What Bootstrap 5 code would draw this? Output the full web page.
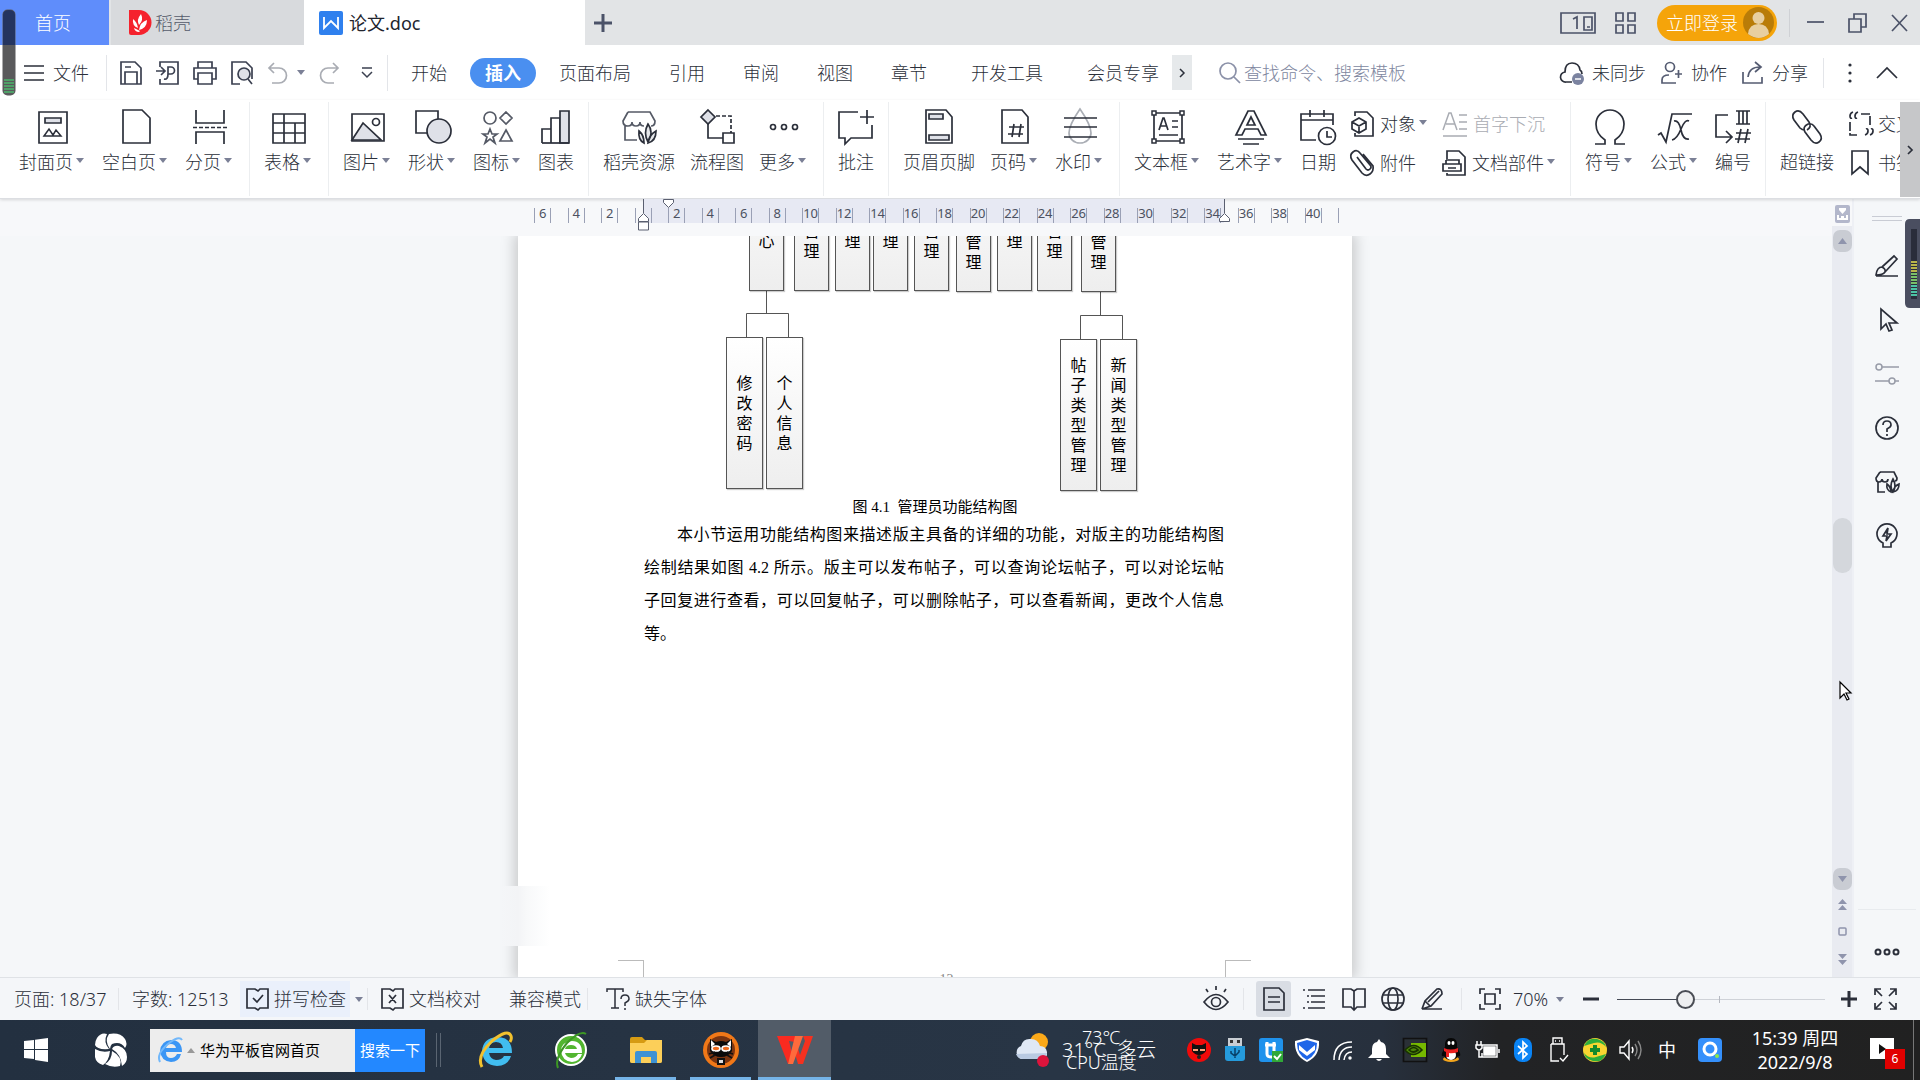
<!DOCTYPE html>
<html lang="zh-CN">
<head>
<meta charset="utf-8">
<meta name="viewport" content="width=device-width, initial-scale=1">
<title>论文.doc</title>
<link href="https://cdn.jsdelivr.net/npm/bootstrap@5.3.0/dist/css/bootstrap.min.css" rel="stylesheet">
<script src="https://cdn.jsdelivr.net/npm/bootstrap@5.3.0/dist/js/bootstrap.bundle.min.js"></script>
<style>
  :root { --ink: #2b2f3a; --soft: #7b8096; --panel: #f5f7f9; }
  body { font-family: "Noto Sans", "Noto Sans CJK SC", sans-serif; font-size: 18px; line-height: 24px; font-weight: 300; color: var(--ink); background: var(--panel); overflow: hidden; }
  button, input { font: inherit; color: inherit; }
  button { border: 0; background: none; padding: 0; white-space: nowrap; }
  svg { display: block; flex: none; overflow: visible; }
  svg:not([fill]) { fill: none; }
  svg:not([stroke]) { stroke: currentColor; }
  svg:not([stroke-width]) { stroke-width: 1.7; }
  .shade { fill: #dfe1e8; }
  svg.solid { fill: currentColor; stroke: none; }
  .caret { width: 0; height: 0; border: 4px solid transparent; border-top: 5px solid var(--soft); border-bottom: 0; flex: none; }
  .rule { width: 1px; background: #e3e5e9; flex: none; }

  /* title bar */
  .titlebar { height: 45px; background: #e2e4e6; color: #4b5268; }
  .tab-home { width: 109px; background: #5f8dfb; color: #fff; padding-right: 3px; }
  .tab-shop { width: 193px; background: #d8dadd; margin-left: 2px; padding-left: 17px; gap: 4px; color: #555a6b; }
  .tab-doc { width: 281px; background: #fff; color: #22252e; padding-left: 15px; gap: 6px; font-weight: 400; }
  .tab-new { width: 35px; }
  .login { width: 120px; height: 36px; border-radius: 18px; background: #f5a40a; color: #fff; padding: 0 3px 0 9px; margin: 0 12px 0 19px; }
  .winbtns { gap: 23px; padding: 0 11px 0 17px; }

  /* menu row */
  .menubar { height: 55px; background: #fff; }
  .filebtn { margin-left: 23px; gap: 8px; width: 83px; }
  .quick { gap: 13px; padding-left: 12px; width: 280px; color: #3b4050; }
  .menutab { height: 30px; border-radius: 15px; padding: 0 15px; margin: 0 4px; }
  .menutab.on { background: #4a8ff0; color: #fff; font-weight: 700; }
  .menutab.wide { margin-left: 10px; }
  .more { width: 20px; height: 35px; background: #e6e9eb; margin-left: -6px; }
  .find { margin-left: 27px; gap: 3px; color: #8b91a8; }
  .find input { border: 0; outline: 0; width: 200px; padding: 0; background: none; }
  .find input::placeholder { color: #8087a0; opacity: 1; }
  .share { gap: 15px; padding-right: 22px; }

  /* ribbon */
  .ribbon { height: 99px; background: #fff; border-bottom: 1px solid #dcdee2; box-shadow: 0 1px 3px #0002; position: relative; }
  .groups { gap: 14px; padding-left: 19px; min-width: 0; overflow: hidden; }
  .groups .rule { background: #eceef0; height: 94px; margin-top: 2px; }
  .group { gap: 15px; }
  .big { display: flex; flex-direction: column; align-items: center; gap: 5px; padding-top: 9px; height: 90px; flex: none; }
  .drop { display: flex; align-items: center; }
  .drop::after { content: ""; border: 4px solid transparent; border-top: 5px solid var(--soft); border-bottom: 0; margin: 0 3px 3px 3px; }
  .pairs { display: grid; grid-template-columns: auto auto; column-gap: 12px; grid-auto-rows: 39px; padding-top: 4px; margin-right: -2px; align-items: center; justify-items: start; align-content: start; }
  .pairs button { display: flex; align-items: center; gap: 6px; }
  .off { color: #a9acb3; }
  .ribbon-next { width: 20px; height: 95px; margin-top: 2px; background: #c6c7c9; }

  /* document area */
  .work { padding-left: 38px; }
  .ruler { height: 37px; background: #f7f8fa; margin-left: -38px; padding-left: 38px; }
  .ruler-in { width: 834px; position: relative; }
  .ticks { width: 805px; height: 24px; margin-left: 16px; padding-top: 9px; background: linear-gradient(90deg, #0000 109px, #e7e9f3 109px, #e7e9f3 690px, #0000 690px); color: #4c5160; font-size: 13px; line-height: 10px; }
  .ticks span { flex: 1 1 0; height: 15px; border-left: 1px solid #9aa0b5; }
  .ticks span:last-child { border-right: 1px solid #9aa0b5; }
  .ticks b { display: flex; justify-content: center; font-weight: 400; width: 50%; height: 15px; border-right: 1px solid #9aa0b5; }
  .marks { position: absolute; left: 0; top: 0; color: #5a5f70; }
  .sheet { width: 834px; background: #fff; box-shadow: 0 0 14px 3px #0003; position: relative; clip-path: inset(0 -18px); }
  .chart { height: 260px; position: relative; overflow: hidden; color: #000; }
  .node { position: absolute; width: 35px; border: 1px solid #555; background: linear-gradient(#fff, #eee); box-shadow: 1px 1px 1px #0003; display: flex; flex-direction: column; align-items: center; font-size: 16px; line-height: 20px; font-weight: 400; }
  .node span { width: 16px; word-break: break-all; }
  .upper { top: -100px; height: 155px; justify-content: flex-end; padding-bottom: 29px; }
  .upper.hi { padding-bottom: 39px; }
  .upper.lo { padding-bottom: 19px; height: 156px; }
  .leaf { width: 37px; height: 152px; justify-content: center; padding-bottom: 1px; }
  .prose { padding: 0 128px 0 126px; color: #000; font: 400 16px/33px "Liberation Serif", "Noto Sans CJK SC", serif; }
  .prose .ln { display: block; text-align: justify; text-align-last: justify; white-space: nowrap; }
  .prose .ln:first-child { padding-left: 33px; }
  .prose .ln:last-child { text-align-last: left; }
  .figcap { font: 400 15px/22px "Liberation Serif", "Noto Sans CJK SC", serif; color: #000; text-align: center; }
  .corners { position: absolute; left: 100px; right: 101px; bottom: 0; height: 17px; color: #888; overflow: hidden; font: 14px/20px "Liberation Serif", serif; }
  .corners i { width: 26px; height: 17px; border: 1px solid #bbb; border-width: 1px 1px 0 0; }
  .corners i:last-child { border-width: 1px 0 0 1px; }
  .corners span { padding: 10px 0 0 24px; }
  .haze { position: absolute; left: -18px; bottom: 31px; width: 50px; height: 60px; background: linear-gradient(90deg, #f4f6f8, #f3f4f6 36%, #f8f9fa 55%, #fff); }

  /* scrollbar and side panel */
  .scroller { width: 22px; background: #e9ebf1; border-right: 2px solid #eef0f5; color: #8f94ac; }
  .scroller .top { height: 27px; background: #f7f8fa; padding-top: 6px; }
  .knob { width: 19px; height: 22px; border-radius: 7px; background: #c9ccd3; }
  .thumb { width: 19px; height: 55px; border-radius: 9px; background: #d4d7dc; margin-top: 266px; }
  .side { width: 66px; }
  .side .grip { width: 30px; height: 5px; border: 1px solid #c9ccd4; border-width: 1px 0; margin: 17px 0 18px; }
  .side button { height: 54px; }
  .side .side-more { height: 67px; padding-top: 16px; }
  .side hr { width: 58px; margin: 0; color: #c4c7cf; }

  /* status bar */
  .status { height: 43px; background: #f4f6f9; border-top: 1px solid #dfe2e6; padding-left: 14px; }
  .status .rule { height: 22px; }
  .spell { width: 110px; height: 36px; background: #eaf0fb; gap: 5px; padding-left: 6px; margin-left: 13px; }
  .view { width: 35px; height: 36px; border-radius: 3px; }
  .view.on { background: #d9dde4; }
  .zoom { appearance: none; width: 208px; height: 20px; background: linear-gradient(#b5b8c0, #b5b8c0) 102px 50%/1px 7px no-repeat, linear-gradient(90deg, #444955 68px, #cfd2d8 68px) 0 50%/100% 1px no-repeat; }
  .zoom::-webkit-slider-thumb { appearance: none; width: 19px; height: 19px; border-radius: 50%; border: 2px solid #4a4d55; background: #eeeff1; }

  /* taskbar */
  .taskbar { height: 60px; background: linear-gradient(90deg, #233040, #283545 55%, #27303d 72%, #222325 78%, #212121); color: #fff; font-weight: 400; }
  .tasksearch { width: 275px; height: 43px; background: #ededed; color: #000; font-size: 15px; margin-left: 22px; }
  .tasksearch input { border: 0; outline: 0; background: none; flex: 1; min-width: 0; padding: 0 0 0 5px; }
  .tasksearch button { width: 70px; flex: none; background: #2388ff; color: #fff; height: 43px; }
  .grips { width: 5px; height: 34px; border: 1px solid #5a6572; border-width: 0 1px; margin: 0 24px 0 11px; }
  .app { height: 60px; width: 61px; border-bottom: 3px solid transparent; margin: 0 7px; padding-top: 3px; }
  .app.run { border-color: #75b4e8; }
  .app.now { width: 73px; margin: 0; background: #525c68; }
  .weather { width: 102px; height: 60px; position: relative; margin: 0 17px 0 12px; font-weight: 300; white-space: nowrap; }
  .weather span { position: absolute; }
  .w-a { left: 20px; top: 5px; }
  .w-b { left: 0; top: 18px; font-size: 20px; }
  .w-c { left: 4px; top: 30px; }
  .tray > span { width: 36px; display: flex; justify-content: center; }
  .clock { width: 106px; text-align: center; margin: 0 22px 0 7px; }
  .notice { width: 44px; position: relative; border-right: 1px solid #777; height: 60px; margin-right: 6px; }
  .notice span { position: absolute; left: 15px; top: 29px; width: 20px; height: 20px; background: #e10000; font-size: 12px; line-height: 20px; text-align: center; }

  /* overlays of the desktop gauge and the pointer */
  .gauge-l { position: absolute; left: 2px; top: 9px; z-index: 5; }
  .gauge-r { position: absolute; right: 0; top: 219px; z-index: 5; }
  .pointer { position: absolute; left: 1839px; top: 681px; z-index: 6; }
</style>
</head>
<body class="vh-100 d-flex flex-column position-relative">

<header class="titlebar d-flex align-items-stretch">
  <a href="#" class="tab-home d-flex align-items-center justify-content-center text-decoration-none">首页</a>
  <a href="#" class="tab-shop d-flex align-items-center text-decoration-none">
    <svg width="23" height="25" viewBox="0 0 23 25" stroke="none"><path d="M1 0h10a12 12 0 0 1 0 25H3a2 2 0 0 1-2-2z" fill="#f5222d"/><g fill="#fff"><path d="M13 4q3 6-2 11q-3-5 2-11z"/><path d="M5 9q4 3 5 9q-6-2-5-9z"/><path d="M19 10q0 8-8 10q1-8 8-10z"/><path d="M6 18l6 3-1 1q-4 0-5-4z"/></g></svg>稻壳</a>
  <a href="#" class="tab-doc d-flex align-items-center text-decoration-none">
    <svg width="24" height="24" viewBox="0 0 24 24" stroke="none"><rect width="24" height="24" rx="2" fill="#2f80ee"/><path d="M5 6v11l7-7 7 7V6" stroke="#fff" stroke-width="1.800"/></svg>论文.doc</a>
  <button class="tab-new d-flex align-items-center justify-content-center" aria-label="新建"><svg width="18" height="18" viewBox="0 0 18 18" stroke-width="3"><path d="M9 0v18M0 9h18"/></svg></button>
  <div class="ms-auto d-flex align-items-center">
    <svg width="36" height="22" viewBox="0 0 36 22"><path d="M1 1h34v20H1zM24 5h8v13h-8zM27 15h3M13 7l4-2v12"/></svg>
    <svg class="ms-3" width="26" height="24" viewBox="0 0 26 24"><path d="M4 2h7v8H4zM16 2h7v8h-7zM4 14h7v8H4zM16 14h7v8h-7z"/></svg>
    <button class="login d-flex align-items-center justify-content-between">立即登录<svg width="31" height="31" viewBox="0 0 31 31" stroke="none"><circle cx="15.500" cy="15.500" r="15.500" fill="#b97c08"/><circle cx="15.500" cy="11" r="6" fill="#e8cfa0"/><path d="M5 27q1-10 10.500-10T26 27q-10 8-21 0z" fill="#e8cfa0"/></svg></button>
    <div class="rule" style="height:28px;background:#cfd1d5"></div>
    <div class="winbtns d-flex align-items-center">
      <button aria-label="最小化"><svg width="18" height="20" viewBox="0 0 18 20"><path d="M0 9h17"/></svg></button>
      <button aria-label="还原"><svg width="20" height="20" viewBox="0 0 20 20"><path d="M1 6h12v13H1zM6 6V1h12v13h-5"/></svg></button>
      <button aria-label="关闭"><svg width="18" height="20" viewBox="0 0 18 20"><path d="M1 2l15 16M16 2L1 18"/></svg></button>
    </div>
  </div>
</header>

<nav class="menubar d-flex align-items-center">
  <button class="filebtn d-flex align-items-center"><svg width="22" height="18" viewBox="0 0 22 18" stroke-width="1.500"><path d="M1 2h20M1 9h20M1 16h20"/></svg>文件</button>
  <div class="rule" style="height:36px"></div>
  <div class="quick d-flex align-items-center">
    <button aria-label="保存"><svg width="24" height="24" viewBox="0 0 24 24"><path d="M2 1h14l6 6v16H2zM6 23V11h12v12M6 6h6"/></svg></button>
    <button aria-label="输出"><svg width="24" height="24" viewBox="0 0 24 24"><path d="M4 6V1h18v22H4v-5M0 10h9M5 6l4 4-4 4M12 6h3a3 3 0 0 1 0 7h-3zM12 13q0 6-4 5"/></svg></button>
    <button aria-label="打印"><svg width="24" height="24" viewBox="0 0 24 24"><path d="M5 7V1h14v6M5 18H1V7h22v11h-4M5 12h14v11H5z"/></svg></button>
    <button aria-label="预览"><svg width="24" height="24" viewBox="0 0 24 24"><path d="M10 23H2V1h14l6 6v5"/><circle class="shade" cx="14" cy="13" r="6"/><path d="M18 18l4 5M22 12v6"/></svg></button>
    <button class="off" aria-label="撤销"><svg width="22" height="24" viewBox="0 0 22 24"><path d="M7 2L2 7l5 5M2 7h10a7 7 0 0 1 0 15H5"/></svg></button>
    <span class="caret" style="margin-left:-5px"></span>
    <button class="off" aria-label="恢复"><svg width="22" height="24" viewBox="0 0 22 24"><path d="M15 2l5 5-5 5M20 7H10a7 7 0 0 0 0 15h6"/></svg></button>
    <button class="ms-2" aria-label="自定义"><svg width="12" height="12" viewBox="0 0 12 12" stroke-width="1.500"><path d="M1 1h10M1 5l5 5 5-5"/></svg></button>
  </div>
  <div class="rule" style="height:36px;margin-right:4px"></div>
  <button class="menutab">开始</button><button class="menutab on">插入</button><button class="menutab">页面布局</button><button class="menutab">引用</button><button class="menutab">审阅</button><button class="menutab">视图</button><button class="menutab">章节</button><button class="menutab wide">开发工具</button><button class="menutab wide">会员专享</button>
  <button class="more d-flex align-items-center justify-content-center" aria-label="更多"><svg width="5" height="10" viewBox="0 0 5 10" stroke-width="1.500"><path d="M0 1l4 4-4 4"/></svg></button>
  <label class="find d-flex align-items-center"><svg width="22" height="24" viewBox="0 0 22 24"><circle cx="9" cy="10" r="8"/><path d="M15 16l6 6"/></svg><input type="text" aria-label="搜索" placeholder="查找命令、搜索模板"></label>
  <div class="share d-flex align-items-center ms-auto">
    <button class="d-flex align-items-center gap-2"><svg width="24" height="24" viewBox="0 0 24 24"><path d="M12 21H6A5 5 0 0 1 5 11Q5 2 12 2t8 7q2 1 2 4"/><circle cx="18" cy="18" r="6" fill="#7b83a0" stroke="none"/><path d="M15 18h6" stroke="#fff" stroke-width="1.500"/></svg>未同步</button>
    <button class="d-flex align-items-center gap-2"><svg width="22" height="24" viewBox="0 0 22 24" stroke="#555c72"><circle cx="9" cy="6" r="4.500"/><path d="M15 22H1v-3q0-5 7-5M14 13h7M17.500 9v8"/></svg>协作</button>
    <button class="d-flex align-items-center gap-2"><svg width="22" height="24" viewBox="0 0 22 24" stroke="#555c72"><path d="M1 11v11h19v-6M6 16q1-10 12-10M13 1l6 5-6 5"/></svg>分享</button>
    <div class="rule" style="height:30px"></div>
    <button aria-label="菜单"><svg class="solid" width="22" height="20" viewBox="0 0 22 20"><circle cx="11" cy="2" r="1.600"/><circle cx="11" cy="10" r="1.600"/><circle cx="11" cy="18" r="1.600"/></svg></button>
    <button aria-label="折叠功能区"><svg width="22" height="14" viewBox="0 0 22 14"><path d="M1 12L11 2l10 10"/></svg></button>
  </div>
</nav>

<section class="ribbon d-flex justify-content-between">
  <div class="groups d-flex flex-fill">
    <div class="group d-flex">
      <button class="big"><svg width="36" height="36" viewBox="0 0 36 36"><path d="M4 3h28v31H4z"/><path class="shade" d="M10 9h16v5H10z"/><path d="M9 27l5-7 4 6 3-5 5 6z" stroke-width="1.500"/></svg><span class="drop">封面页</span></button>
      <button class="big"><svg width="36" height="36" viewBox="0 0 36 36"><path d="M5 1h19l8 8v25H5z"/></svg><span class="drop">空白页</span></button>
      <button class="big"><svg width="36" height="36" viewBox="0 0 36 36"><path d="M4 1v13h28V1M4 35V23h28v12"/><path d="M1 18.500h34" stroke-dasharray="4 2"/></svg><span class="drop">分页</span></button>
    </div>
    <div class="rule"></div>
    <div class="group d-flex">
      <button class="big"><svg width="36" height="36" viewBox="0 0 36 36"><path d="M2 5h32v29H2zM2 14h32M2 24h32M13 5v19M24 14v20M13 24v10"/></svg><span class="drop">表格</span></button>
    </div>
    <div class="rule"></div>
    <div class="group d-flex">
      <button class="big"><svg width="36" height="36" viewBox="0 0 36 36"><path class="shade" d="M2 31l11-17 18 17z"/><path d="M2 5h32v27H2z"/><circle cx="26" cy="13" r="3.500"/></svg><span class="drop">图片</span></button>
      <button class="big"><svg width="36" height="36" viewBox="0 0 36 36"><path d="M1 2h22v22H1z"/><circle class="shade" cx="24" cy="22" r="12"/></svg><span class="drop">形状</span></button>
      <button class="big"><svg width="36" height="36" viewBox="0 0 36 36" stroke="#555a66"><circle cx="10" cy="9" r="6"/><path d="M26 3l6 6-6 6-6-6zM26 21l6 11H20zM10 20l2 5h5l-4 3 2 6-5-4-5 4 2-6-4-3h5z"/></svg><span class="drop">图标</span></button>
      <button class="big"><svg width="36" height="36" viewBox="0 0 36 36"><path d="M4 34V20h9v14M13 34V9h9v25"/><path class="shade" d="M22 2h9v32h-9z"/><path d="M4 34h27"/></svg><span>图表</span></button>
    </div>
    <div class="rule"></div>
    <div class="group d-flex">
      <button class="big"><svg width="36" height="36" viewBox="0 0 36 36" stroke="#555a66"><path d="M7 3h22l5 9q0 5-4 5M7 3L2 12q0 5 5 5 4 0 4-4 0 4 4 4t4-4q0 4 4 4M4 17v14h12"/><path d="M27 15q6 8 0 18q-5-9 0-18zM18 22q5 4 5 12q-6-3-5-12zM35 22q0 10-8 12q1-8 8-12z" fill="#e6e8eb" stroke="#2b2f3a"/></svg><span>稻壳资源</span></button>
      <button class="big"><svg width="36" height="36" viewBox="0 0 36 36"><path class="shade" d="M9 1l7 7-7 7-7-7z"/><path d="M9 15v14h15M24 24h11v10H24z"/><path d="M17 7h15v17" stroke-dasharray="4 2"/></svg><span>流程图</span></button>
      <button class="big"><svg width="36" height="36" viewBox="0 0 36 36"><circle cx="7" cy="18" r="2.500"/><circle cx="18" cy="18" r="2.500"/><circle cx="29" cy="18" r="2.500"/></svg><span class="drop">更多</span></button>
    </div>
    <div class="rule"></div>
    <div class="group d-flex">
      <button class="big"><svg width="36" height="36" viewBox="0 0 36 36"><path d="M20 3H1v26h6v6l6-6h21V16M29 1v14M22 8h14"/></svg><span>批注</span></button>
    </div>
    <div class="rule"></div>
    <div class="group d-flex">
      <button class="big"><svg width="36" height="36" viewBox="0 0 36 36"><path d="M5 1h20l6 7v26H5z"/><path class="shade" d="M8 5h14v5H8zM8 26h20v5H8z"/></svg><span>页眉页脚</span></button>
      <button class="big"><svg width="36" height="36" viewBox="0 0 36 36"><path d="M5 1h20l6 7v26H5zM17 15l-2 13M24 15l-2 13M12 18h15M11 25h15"/></svg><span class="drop">页码</span></button>
      <button class="big"><svg width="36" height="36" viewBox="0 0 36 36"><path d="M18 0Q7 16 7 24a11 10 0 0 0 22 0Q29 16 18 0z" stroke="#aaaeb5"/><path d="M2 9h33M2 18h33M2 28h33"/></svg><span class="drop">水印</span></button>
    </div>
    <div class="rule"></div>
    <div class="group d-flex">
      <button class="big"><svg width="36" height="36" viewBox="0 0 36 36"><path d="M4 4h28v28H4zM9 21l4-12h1l4 12M11 17h6M22 12h6M22 18h6M9 26h19"/><path d="M2 2h4v4H2zM30 2h4v4h-4zM2 30h4v4H2zM30 30h4v4h-4z" fill="#fff" stroke-width="1.500"/></svg><span class="drop">文本框</span></button>
      <button class="big"><svg width="36" height="36" viewBox="0 0 36 36"><path d="M3 26L15 2h6l12 24h-5l-3-6H12l-3 6zM18 8l-4 8h8zM5 30h26M10 35h16"/></svg><span class="drop">艺术字</span></button>
      <button class="big"><svg width="36" height="36" viewBox="0 0 36 36"><path d="M33 16V5H1v26h15M1 11h32M10 1v7M24 1v7"/><circle cx="27" cy="27" r="8.500"/><path d="M27 22v6h5"/></svg><span>日期</span></button>
    </div>
    <div class="pairs">
      <button><svg width="24" height="26" viewBox="0 0 24 26"><path d="M5 5V1h12l6 6v18H5v-3M9 7l7 4v7l-7 4-7-4v-7zM2 11l7 4 7-4M9 15v7"/></svg><span class="drop">对象</span></button>
      <button class="off"><svg width="25" height="26" viewBox="0 0 25 26" stroke-width="1.500"><path d="M1 19L7 2h2l6 17M4 13h9M17 4h8M17 11h8M17 18h8M1 25h24"/></svg>首字下沉</button>
      <button><svg width="24" height="26" viewBox="0 0 24 26"><path d="M7 7l9 12q2 2 4 0t0-4L10 3Q7-1 3 2t-1 8l10 13q4 4 8 1t3-8L13 4"/></svg>附件</button>
      <button><svg width="24" height="26" viewBox="0 0 24 26"><path d="M5 9V1h12l6 6v18H5v-2M4 10h13v4M4 10v4M1 14h18v7H1zM6 18h8"/></svg><span class="drop">文档部件</span></button>
    </div>
    <div class="rule"></div>
    <div class="group d-flex">
      <button class="big"><svg width="36" height="36" viewBox="0 0 36 36"><path d="M3 35h10v-4Q4 25 4 15a14 14 0 0 1 28 0q0 10-9 16v4h10"/></svg><span class="drop">符号</span></button>
      <button class="big"><svg width="36" height="36" viewBox="0 0 36 36"><path d="M1 26l3-2 5 9L15 5h20M32 12q-4-2-8 8t-9 11M17 12q5-1 7 9t8 9"/></svg><span class="drop">公式</span></button>
      <button class="big"><svg width="36" height="36" viewBox="0 0 36 36"><path d="M13 6H1v22h15M11 22l6 6-6 6M21 2h14M21 15h14M24 2v13M28 2v13M32 2v13M26 20l-3 14M33 20l-3 14M21 24h15M20 30h15"/></svg><span>编号</span></button>
    </div>
    <div class="rule"></div>
    <button class="big"><svg width="36" height="36" viewBox="0 0 36 36"><path d="M16 21q-3 0-5-2L5 11Q2 6 6 3t8 2l6 8q3 5-2 8M19 15q4-1 6 2l6 8q3 5-1 8t-8-2l-6-8q-3-5 3-8"/></svg><span>超链接</span></button>
    <div class="pairs">
      <button><svg width="24" height="26" viewBox="0 0 24 26"><path d="M2 11v13h9M13 3h9v12" stroke-dasharray="9 2"/><path d="M5 1Q2 2 2 5t2 2M10 1Q7 2 7 5t2 2M17 24q3-1 3-4t-2-2M22 24q3-1 3-4t-2-2"/></svg><span>交叉引用</span></button><i></i>
      <button><svg width="24" height="26" viewBox="0 0 24 26"><path d="M4 1h16v23l-8-7-8 7z"/></svg><span>书签</span></button>
    </div>
  </div>
  <button class="ribbon-next d-flex align-items-center justify-content-center flex-shrink-0" aria-label="向右滚动"><svg width="6" height="10" viewBox="0 0 6 10"><path d="M1 1l4 4-4 4"/></svg></button>
</section>

<main class="d-flex flex-fill" style="min-height:0">
  <div class="work flex-fill d-flex flex-column align-items-center overflow-hidden">
    <div class="ruler align-self-stretch d-flex justify-content-center">
      <div class="ruler-in">
        <div class="ticks d-flex">
          <span><b>6</b></span><span><b>4</b></span><span><b>2</b></span><span><b></b></span><span><b>2</b></span><span><b>4</b></span><span><b>6</b></span><span><b>8</b></span><span><b>10</b></span><span><b>12</b></span><span><b>14</b></span><span><b>16</b></span><span><b>18</b></span><span><b>20</b></span><span><b>22</b></span><span><b>24</b></span><span><b>26</b></span><span><b>28</b></span><span><b>30</b></span><span><b>32</b></span><span><b>34</b></span><span><b>36</b></span><span><b>38</b></span><span><b>40</b></span>
        </div>
        <svg class="marks" width="834" height="37" viewBox="0 0 834 37" stroke-width="1"><path d="M125.500 0v14M706.500 0v14"/><path fill="#fff" d="M120.500 31v-8h10v8zM120.500 22.500v-3l5-5 5 5v3zM145.500 0.500h10v3l-5 5-5-5zM701.500 22.500v-3l5-5 5 5v3z"/></svg>
      </div>
    </div>
    <article class="sheet flex-fill">
      <div class="haze"></div>
      <div class="chart">
        <svg width="834" height="260" viewBox="0 0 834 260" stroke="#555" stroke-width="1"><path d="M248.500 54v23.500M228.500 102V77.500h42V102M582.500 56v23.500M562.500 104V79.500h42V104"/></svg>
        <div class="node upper hi" style="left:231px"><span>心</span></div>
        <div class="node upper" style="left:276px"><span>管理</span></div>
        <div class="node upper hi" style="left:317px"><span>理</span></div>
        <div class="node upper hi" style="left:355px"><span>理</span></div>
        <div class="node upper" style="left:396px"><span>管理</span></div>
        <div class="node upper lo" style="left:438px"><span>管理</span></div>
        <div class="node upper hi" style="left:479px"><span>理</span></div>
        <div class="node upper" style="left:519px"><span>管理</span></div>
        <div class="node upper lo" style="left:563px"><span>管理</span></div>
        <div class="node leaf" style="left:208px;top:101px"><span>修改密码</span></div>
        <div class="node leaf" style="left:248px;top:101px"><span>个人信息</span></div>
        <div class="node leaf" style="left:542px;top:103px"><span>帖子类型管理</span></div>
        <div class="node leaf" style="left:582px;top:103px"><span>新闻类型管理</span></div>
      </div>
      <div class="figcap">图 4.1&nbsp; 管理员功能结构图</div>
      <p class="prose m-0"><span class="ln">本小节运用功能结构图来描述版主具备的详细的功能，对版主的功能结构图</span><span class="ln">绘制结果如图 4.2 所示。版主可以发布帖子，可以查询论坛帖子，可以对论坛帖</span><span class="ln">子回复进行查看，可以回复帖子，可以删除帖子，可以查看新闻，更改个人信息</span><span class="ln">等。</span></p>
      <div class="corners d-flex justify-content-between"><i></i><span>12</span><i></i></div>
    </article>
  </div>
  <div class="scroller d-flex flex-column align-items-center">
    <div class="top align-self-stretch d-flex justify-content-center"><svg width="15" height="18" viewBox="0 0 15 18" stroke="none"><rect width="15" height="18" rx="2" fill="#b3b7cb"/><path d="M4 3h7v2L7.500 9 4 5zM2 10h2v3h2v-2h3v2h2v-3h2v5H2z" fill="#fff"/></svg></div>
    <button class="knob mt-1 d-flex align-items-center justify-content-center" aria-label="向上"><svg class="solid" width="9" height="6" viewBox="0 0 9 6"><path d="M0 6l4.500-6L9 6z"/></svg></button>
    <div class="thumb"></div>
    <button class="knob mt-auto d-flex align-items-center justify-content-center" aria-label="向下"><svg class="solid" width="9" height="6" viewBox="0 0 9 6"><path d="M0 0l4.500 6L9 0z"/></svg></button>
    <svg class="solid" style="margin:9px 0 17px" width="9" height="11" viewBox="0 0 9 11"><path d="M0 5l4.500-5L9 5zM0 11l4.500-5L9 11z"/></svg>
    <svg width="9" height="9" viewBox="0 0 9 9" stroke-width="1.500"><rect x="1" y="1" width="7" height="7" rx="1"/></svg>
    <svg class="solid" style="margin:18px 0 12px" width="9" height="11" viewBox="0 0 9 11"><path d="M0 0l4.500 5L9 0zM0 6l4.500 5L9 6z"/></svg>
  </div>
  <aside class="side d-flex flex-column align-items-center">
    <div class="grip"></div>
    <button aria-label="样式"><svg width="24" height="24" viewBox="0 0 24 24"><path d="M1 21q1-8 6-8 4 2 3 5-2 3-9 3zM7 13L19 2l3 3-12 13M1 22h22"/></svg></button>
    <button aria-label="选择"><svg width="24" height="24" viewBox="0 0 24 24"><path d="M6 1v20l5-5 3 7 3-1-3-7h8z"/></svg></button>
    <button class="off" aria-label="属性"><svg width="24" height="24" viewBox="0 0 24 24" stroke="#989ca8" stroke-width="1.500"><circle cx="4" cy="5" r="3"/><path d="M7 5h17M0 19h14M20 19h4"/><circle cx="17" cy="19" r="3"/></svg></button>
    <button aria-label="帮助"><svg width="24" height="24" viewBox="0 0 24 24"><circle cx="12" cy="12" r="11"/><path d="M8 9q0-4 4-4t4 4q0 2-4 4v3M12 18v2"/></svg></button>
    <button aria-label="稻壳"><svg width="24" height="24" viewBox="0 0 24 24"><path d="M5 2h14l3 6q0 3-2 3M5 2L1 8q0 4 3 4t3-3q0 3 3 3t3-3M3 12v10h7"/><path d="M18 9q4 7 0 13q-4-6 0-13zM12 14q4 3 4 8q-5-2-4-8zM24 14q0 7-6 8q1-6 6-8z"/></svg></button>
    <button aria-label="智能"><svg width="24" height="26" viewBox="0 0 24 26"><path d="M8 24v-4a10 10 0 1 1 8 0v4zM13 5l-5 8h4l-1 5 5-7h-4z"/></svg></button>
    <hr class="mt-auto">
    <button class="side-more d-flex align-items-center" aria-label="更多"><svg width="26" height="8" viewBox="0 0 26 8" stroke-width="2"><circle cx="4" cy="4" r="2.500"/><circle cx="13" cy="4" r="2.500"/><circle cx="22" cy="4" r="2.500"/></svg></button>
  </aside>
</main>

<footer class="status d-flex align-items-center">
  <span style="width:104px">页面: 18/37</span><div class="rule"></div>
  <span class="text-nowrap" style="width:108px;padding-left:13px">字数: 12513</span>
  <button class="spell d-flex align-items-center"><svg width="23" height="24" viewBox="0 0 23 24"><path d="M1 2h8l3 2 2-2h8v19h-8l-2 2-3-2H1zM7 11l4 4 6-7"/></svg>拼写检查<span class="caret ms-1"></span></button>
  <div class="rule" style="margin:0 13px 0 17px"></div>
  <button class="d-flex align-items-center" style="gap:5px"><svg width="23" height="24" viewBox="0 0 23 24"><path d="M1 2h8l3 2 2-2h8v19h-8l-2 2-3-2H1zM8 8l7 8M15 8l-7 8"/></svg>文档校对</button>
  <button style="margin:0 6px 0 28px">兼容模式</button><div class="rule"></div>
  <button class="d-flex align-items-center" style="gap:5px;margin-left:18px"><svg width="24" height="24" viewBox="0 0 24 24" stroke-width="1.500"><path d="M1 5V2h16v3M9 2v19M5 21h8M15 12q0-4 4-4t4 4q0 2-4 4v3M19 21v2"/></svg>缺失字体</button>

  <div class="d-flex align-items-center ms-auto">
    <button style="margin-right:14px" aria-label="护眼"><svg width="26" height="24" viewBox="0 0 26 24"><path d="M1 15q12-15 24 0-12 15-24 0zM3 2l2 3M13-1v4M23 2l-2 3"/><circle cx="13" cy="15" r="4.500"/></svg></button>
    <div class="rule" style="margin-right:12px"></div>
    <button class="view on d-flex align-items-center justify-content-center" aria-label="页面视图"><svg width="22" height="24" viewBox="0 0 22 24"><path d="M1 1h15l5 5v17H1zM5 10h12M5 15h12"/></svg></button>
    <div class="d-flex" style="gap:15px;margin:0 17px 0 12px">
      <button aria-label="大纲"><svg width="24" height="24" viewBox="0 0 24 24"><path d="M5 3h17M8 9h14M8 15h14M5 21h17M0 3h2M4 9h2M4 15h2M0 21h2"/></svg></button>
      <button aria-label="阅读"><svg width="24" height="24" viewBox="0 0 24 24"><path d="M1 2h8l3 2 3-2h8v18h-8l-3 3-3-3H1zM12 4v18"/></svg></button>
      <button aria-label="网页"><svg width="24" height="24" viewBox="0 0 24 24"><circle cx="12" cy="12" r="11"/><ellipse cx="12" cy="12" rx="5" ry="11"/><path d="M2 8h20M2 16h20"/></svg></button>
      <button aria-label="写作"><svg width="24" height="24" viewBox="0 0 24 24"><path d="M2 22l3-8L17 2q5-1 5 5L11 19l-9 3h20M5 14l5 5M8 15L19 4"/></svg></button>
    </div>
    <div class="rule"></div>
    <button style="margin:0 12px 0 17px" aria-label="适应窗口"><svg width="22" height="22" viewBox="0 0 22 22"><path d="M1 6V1h5M16 1h5v5M21 16v5h-5M6 21H1v-5M6 6h10v10H6z"/></svg></button>
    <button class="d-flex align-items-center" style="width:70px;gap:8px">70%<span class="caret"></span></button>
    <button aria-label="缩小"><svg width="16" height="16" viewBox="0 0 16 16" stroke-width="3"><path d="M0 8h16"/></svg></button>
    <input class="zoom" type="range" min="0" max="100" value="31" aria-label="缩放" style="margin:0 16px 0 18px">
    <button aria-label="放大"><svg width="16" height="16" viewBox="0 0 16 16" stroke-width="3"><path d="M8 0v16M0 8h16"/></svg></button>
    <button style="margin:0 23px 0 17px" aria-label="全屏"><svg width="23" height="22" viewBox="0 0 23 22"><path d="M1 7V1h6M1 1l7 7M16 1h6v6M22 1l-7 7M22 15v6h-6M22 21l-7-7M7 21H1v-6M1 21l7-7"/></svg></button>
  </div>
</footer>

<footer class="taskbar d-flex align-items-center">
  <button style="margin:0 46px 0 24px" aria-label="开始"><svg class="solid" width="24" height="24" viewBox="0 0 24 24"><path d="M0 3l10-1v9H0zM11 1.800L24 0v11H11zM0 12h10v9L0 20zM11 12h13v12l-13-2z"/></svg></button>
  <svg width="34" height="34" viewBox="0 0 34 34" stroke="none"><g fill="#fff"><path d="M3 5Q7-1 13 1q-4 8 2 15Q3 17 1 12 1 8 3 5z"/><path d="M15 1q11-2 16 5 3 5 0 9-4-7-13-4-2 2-2 5-6-8-1-15z"/><path d="M18 16q2-4 7-3 8 3 8 11 0 6-5 9-1-12-10-17z"/><path d="M18 18q11 6 8 15-8 2-15-2 7-4 7-13z"/><path d="M1 16q7 4 15 2-1 10-7 14Q2 30 1 24z"/></g></svg>
  <div class="tasksearch d-flex align-items-center">
    <svg style="margin:0 4px 0 9px" width="24" height="26" viewBox="0 0 24 26" stroke="none"><path d="M18 17q-2 4-6 4-5 0-5-6h16q0-12-11-12Q2 4 1 14q1 10 11 11 8 0 10-8zM7 11q1-4 5-4t5 4z" fill="#3b96f5"/><path d="M1 25Q-3 17 9 7 20-2 23 3" stroke="#72b8fa" stroke-width="2"/></svg>
    <svg width="8" height="6" viewBox="0 0 8 6" fill="#999" stroke="none"><path d="M0 6l4-5 4 5z"/></svg>
    <input type="text" aria-label="任务栏搜索" value="华为平板官网首页"><button>搜索一下</button>
  </div>
  <div class="grips"></div>
  <button class="app d-flex align-items-center justify-content-center" style="margin-left:0" aria-label="IE"><svg width="36" height="36" viewBox="0 0 36 36" stroke="none"><path d="M26 24q-2 4-8 4-6-1-7-7h23Q34 5 19 5 5 6 4 19q1 14 15 15 11 0 14-10zM11 16q1-6 7-6t7 6z" fill="#41bdf0"/><path d="M4 35Q-2 24 14 9 30-4 33 4q1 3-1 6" stroke="#f2c12e" stroke-width="3"/></svg></button>
  <button class="app d-flex align-items-center justify-content-center" aria-label="浏览器"><svg width="36" height="36" viewBox="0 0 36 36" stroke="none"><circle cx="18" cy="18" r="15" fill="#52b52f" stroke="#fff" stroke-width="2"/><path d="M25 22q-2 4-7 4-5-1-6-5h17Q29 9 19 9 8 10 8 19q1 10 11 11 8-1 10-8zM12 17q1-4 6-4t6 4z" fill="#fff"/><path d="M5 36Q1 27 14 11 27-2 33 2" stroke="#3d9824" stroke-width="2"/></svg></button>
  <button class="app run d-flex align-items-center justify-content-center" aria-label="资源管理器"><svg width="34" height="28" viewBox="0 0 34 28" stroke="none"><path d="M1 3q0-2 2-2h10l3 3h15q2 0 2 2v19q0 2-2 2H3q-2 0-2-2z" fill="#d69b13"/><path d="M1 7h14l3-3h15v21q0 2-2 2H3q-2 0-2-2z" fill="#fccf59"/><path d="M6 27V17q0-2 2-2h18q2 0 2 2v10h-6v-6H12v6z" fill="#3d92d4"/></svg></button>
  <button class="app run d-flex align-items-center justify-content-center" aria-label="录屏"><svg width="36" height="36" viewBox="0 0 36 36" stroke="none"><circle cx="18" cy="18" r="18" fill="#f07818"/><circle cx="18" cy="18" r="14" fill="#7a3410"/><path d="M7 7l6 3q5-2 10 0l6-3v12q-4 6-11 6T7 19z" fill="#0a0a0a"/><path d="M8 8l4 4-4 3zM28 8l-4 4 4 3z" fill="#fff"/><ellipse cx="13" cy="16.500" rx="4" ry="2.500" fill="#ee6a1d" stroke="#fff"/><ellipse cx="23" cy="16.500" rx="4" ry="2.500" fill="#ee6a1d" stroke="#fff"/><path d="M6 22l6-2M7 26l5-3M30 22l-6-2M29 26l-5-3" stroke="#111"/><rect x="14" y="26" width="8" height="7" fill="#111"/><path d="M16 28h4v3h-4z" fill="#ddd"/></svg></button>
  <button class="app run now d-flex align-items-center justify-content-center" aria-label="WPS"><svg width="36" height="30" viewBox="0 0 36 30" stroke="none"><path d="M0 1h21l-3 6-6-1 3 12-4 11z" fill="#fa2a20"/><path d="M17 15l4 14h5L36 1H26l2 5-5 14-3-10z" fill="#f5311f"/><path d="M11 29h5L26 1h-8z" fill="#ff6a3c"/></svg></button>
  <div class="ms-auto d-flex align-items-center">
    <svg width="36" height="36" viewBox="0 0 36 36" stroke="none"><circle cx="25" cy="10" r="9" fill="#fba919"/><path d="M7 27a7 7 0 0 1 0-13q2-8 10-7 7 0 9 7 6 0 7 6t-6 7z" fill="#dfe8f5"/><path d="M2 22q2 5 7 5h18q5-1 6-6z" fill="#b9cae2"/><circle cx="29" cy="29" r="6" fill="#dc143c"/></svg>
    <div class="weather"><span class="w-a">73℃</span><span class="w-b">31°C&nbsp; 多云</span><span class="w-c">CPU温度</span></div>
    <div class="tray d-flex align-items-center">
      <span><svg width="24" height="24" viewBox="0 0 24 24" stroke="none"><circle cx="12" cy="12" r="12" fill="#f00a0a"/><path d="M5 5l4 2h6l4-2v8q-3 4-7 4t-7-4z" fill="#111"/><path d="M6 11h5v2H6zM13 11h5v2h-5z" fill="#ffa27a"/><circle cx="12" cy="19" r="2" fill="#222"/></svg></span>
      <span><svg width="22" height="24" viewBox="0 0 22 24" stroke="none"><path d="M4 0h14v8H4z" fill="#c9ced3"/><path d="M6 2h3v3H6zM13 2h3v3h-3z" fill="#333"/><path d="M1 8h20v12q0 3-3 3H4q-3 0-3-3z" fill="#259bdc"/><path d="M11 10v10M7 13v2l4 3 4-4v-2" stroke="#073f67" stroke-width="1.500"/></svg></span>
      <span><svg width="24" height="24" viewBox="0 0 24 24" stroke="none"><rect width="24" height="24" rx="3" fill="#1f92ec"/><path d="M6 7h11M8 4v12q0 3 5 3M15 4v9" stroke="#fff" stroke-width="3"/><path d="M13 13h11v11H13z" fill="#30a838"/><path d="M15 18l3 3 4-5" stroke="#fff" stroke-width="2"/></svg></span>
      <span><svg width="24" height="24" viewBox="0 0 24 24" stroke="none"><path d="M12 0l12 3q1 15-12 21Q-1 18 0 3z" fill="#fff"/><path d="M12 2l10 3q0 12-10 17Q2 17 2 5z" fill="#1f66e8"/><path d="M4 7l8 7 8-7v5l-8 6-8-6z" fill="#fff"/></svg></span>
      <span><svg width="20" height="22" viewBox="0 0 20 22" stroke-width="1.500"><path d="M1 21Q1 3 19 3M6 21Q7 8 19 8M11 21q1-8 8-8"/><circle cx="17" cy="19" r="1" fill="#fff"/></svg></span>
      <span><svg class="solid" width="22" height="22" viewBox="0 0 22 22"><path d="M11 0l2 3q5 1 5 7v5l4 4H0l4-4v-5q0-6 5-7zM8 20h6q-3 4-6 0z"/></svg></span>
      <span><svg width="24" height="24" viewBox="0 0 24 24" stroke="none"><path d="M.5.500h23v23H.5z" fill="#2a3036" stroke="#111"/><path d="M8 5h15v14H8z" fill="#76b900"/><path d="M2 12q9-9 17 0-9 9-17 0zM6 12q5-5 9 0-5 4-9 0z" fill="#4f8a0a" stroke="#193300"/></svg></span>
      <span><svg width="20" height="24" viewBox="0 0 20 24" stroke="none"><ellipse cx="10" cy="21" rx="8" ry="3" fill="#f4a51c"/><path d="M10 0q7 0 6 9l3 6q1 4-2 3-2 4-7 4t-7-4q-3 1-2-3l3-6q-1-9 6-9z" fill="#070707"/><ellipse cx="10" cy="17" rx="5" ry="5" fill="#fff"/><path d="M3 10q7 3 14 0v4q-6 2-9 1v4H5v-5l-2-1z" fill="#e92020"/><ellipse cx="8" cy="5" rx="1.500" ry="2" fill="#fff"/><ellipse cx="12" cy="5" rx="1.500" ry="2" fill="#fff"/></svg></span>
      <span><svg width="24" height="20" viewBox="0 0 24 20" stroke-width="1.500"><path d="M7 5h15v12H7v-4M2 1v4M6 1v4M1 5h6v3q-3 4-6 0zM4 10v7h3M24 9v4"/><path d="M9 7h11v8H9z" fill="#fff"/></svg></span>
      <span><svg width="18" height="24" viewBox="0 0 18 24" stroke="none"><rect width="18" height="24" rx="8" fill="#0a84f5"/><path d="M4 8l9 8-4 4V4l4 4-9 8" stroke="#fff" stroke-width="1.700"/></svg></span>
      <span><svg width="18" height="26" viewBox="0 0 18 26" stroke-width="1.400"><path d="M3 7V1h9v6M1 7h13v11M1 7v17h8M5 4h1M9 4h1M10 21l3 3 5-6"/></svg></span>
      <span><svg width="24" height="24" viewBox="0 0 24 24" stroke="none"><circle cx="12" cy="12" r="12" fill="#f8d531"/><path d="M1 8Q5-1 14 1q8 2 9 8-5-6-12-4T1 8zM23 16q-4 9-13 7-8-2-9-8 5 6 12 4t10-3z" fill="#2fae3b"/><path d="M12 7v10M7 12h10" stroke="#148a2c" stroke-width="4"/></svg></span>
      <span><svg width="24" height="20" viewBox="0 0 24 20" stroke-width="1.400"><path d="M1 7h4l5-6v18l-5-6H1zM13 7q2 3 0 6"/><path d="M16 4q4 6 0 12M19 1q6 9 0 18" stroke="#888"/></svg></span>
      <span>中</span>
      <span style="width:50px"><svg width="24" height="24" viewBox="0 0 24 24" stroke="none"><rect width="24" height="24" rx="4" fill="#3590fb"/><circle cx="12" cy="11" r="6" stroke="#fff" stroke-width="3"/><circle cx="19" cy="18" r="2" fill="#8be84c"/></svg></span>
    </div>
    <div class="clock">15:39 周四<br>2022/9/8</div>
    <div class="notice"><svg style="margin-top:18px" width="24" height="22" viewBox="0 0 24 22" stroke="none"><path d="M0 0h24v21H0z" fill="#fff"/><path d="M9 6l7 5-7 5z" fill="#111"/></svg><span>6</span></div>
  </div>
</footer>

<svg class="gauge-l" width="14" height="87" viewBox="0 0 14 87" stroke="none"><rect x=".5" y=".5" width="13" height="86" rx="5" fill="#5a5a5c"/><path d="M1 36V6q0-5 6-5t6 5v30z" fill="#24345f"/><path d="M2 71h10M2 74h10M2 77h10M2 80h10M2 83h10" stroke="#4cb86c" stroke-width="1.500"/></svg>
<svg class="gauge-r" width="15" height="90" viewBox="0 0 15 90" stroke="none"><path d="M15 0H5Q0 0 0 5v79q0 5 5 5h10z" fill="#4a4e60"/><path d="M6 10h6v70H6z" fill="#2a2d3b"/><path d="M9 42v12" stroke="#b9b54a" stroke-width="6" stroke-dasharray="2 1"/><path d="M9 54v12" stroke="#79c068" stroke-width="6" stroke-dasharray="2 1"/><path d="M9 66v12" stroke="#4cc3a4" stroke-width="6" stroke-dasharray="2 1"/></svg>
<svg class="pointer" width="13" height="20" viewBox="0 0 13 20" stroke="#000" stroke-width="1.200"><path d="M1 1v16l4-4 3 6 2-1-3-6h5z" fill="#fff"/></svg>
</body>
</html>
